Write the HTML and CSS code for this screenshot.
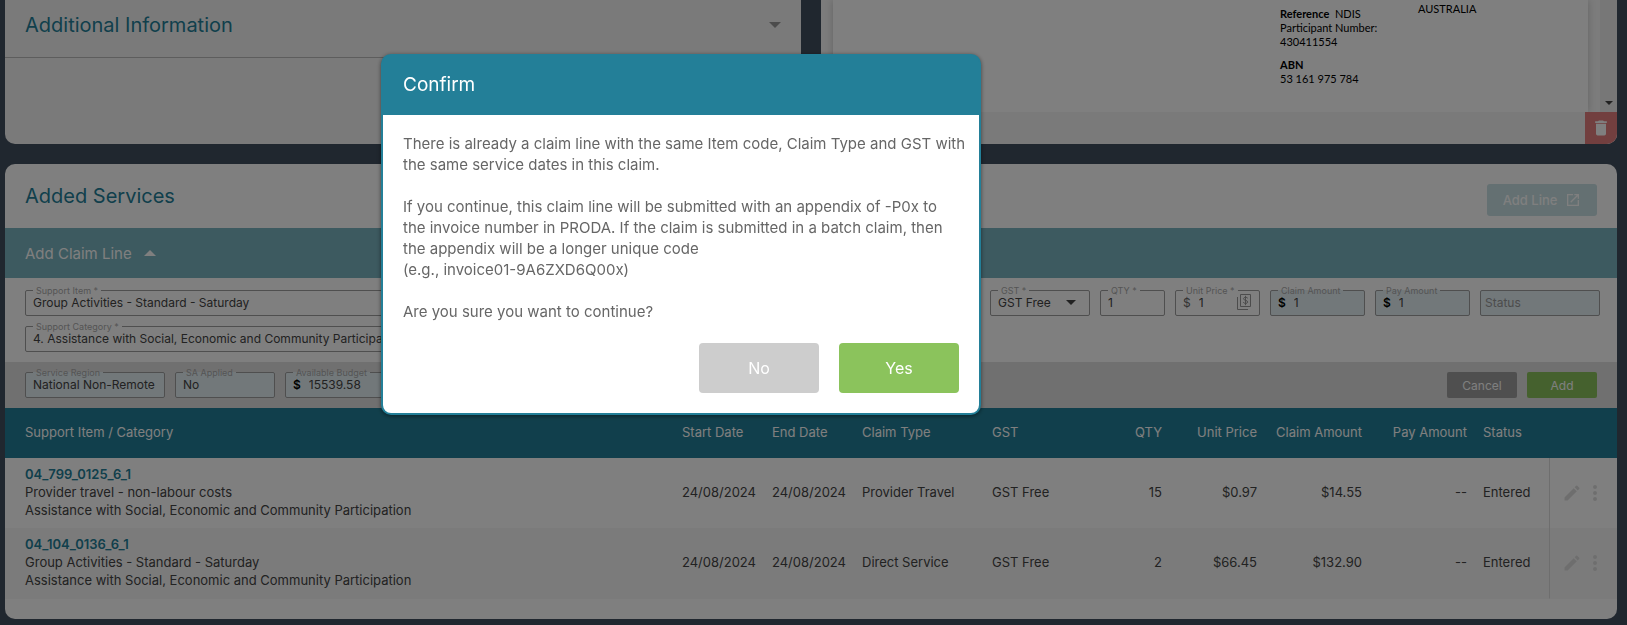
FILE: index.html
```html
<!DOCTYPE html>
<html lang="en">
<head>
  <meta charset="UTF-8">
  <meta name="viewport" content="width=device-width, initial-scale=1.0">
  <title>Claim Services</title>
  <link rel="stylesheet" href="styles.css">
</head>
<body>
  <main class="page">
    <div class="top-row">
      <section class="card info-card">
        <div class="info-header">
          <h2>Additional Information</h2>
          <svg class="caret" width="12" height="6" viewBox="0 0 12 6"><path d="M0 0h12L6 6z"/></svg>
        </div>
      </section>
      <section class="card viewer">
        <div class="viewer-main">
          <div class="document">
            <div class="doc-reference">
              <p><b>Reference</b>&nbsp; NDIS<br>Participant Number:<br>430411554</p>
              <p><b>ABN</b><br>53 161 975 784</p>
            </div>
            <div class="doc-address">AUSTRALIA</div>
          </div>
          <div class="scrollbar">
            <svg width="8" height="4" viewBox="0 0 8 4"><path d="M0 0h8L4 4z"/></svg>
          </div>
        </div>
        <div class="viewer-footer">
          <button type="button" class="delete-button" aria-label="Delete document">
            <svg width="20" height="20" viewBox="0 0 24 24"><path d="M6 19a2 2 0 0 0 2 2h8a2 2 0 0 0 2-2V7H6zM19 4h-3.500l-1-1h-5l-1 1H5v2h14z"/></svg>
          </button>
        </div>
      </section>
    </div>

    <section class="card services">
      <div class="services-header">
        <h2>Added Services</h2>
        <button type="button" class="add-line" disabled>
          Add Line
          <svg width="16" height="16" viewBox="0 0 24 24"><path d="M19 19H5V5h7V3H3v18h18v-9h-2zM14 3v2h3.600l-9.800 9.800 1.400 1.400L19 6.400V10h2V3z"/></svg>
        </button>
      </div>
      <div class="claim-toggle">
        Add Claim Line
        <svg width="12" height="6" viewBox="0 0 12 6"><path d="M0 6h12L6 0z"/></svg>
      </div>
      <form>
        <div class="claim-fields">
          <fieldset class="field">
            <legend><label for="support-item">Support Item *</label></legend>
            <input type="text" id="support-item" value="Group Activities - Standard - Saturday">
          </fieldset>
          <fieldset class="field">
            <legend><label for="gst">GST *</label></legend>
            <select id="gst"><option>GST Free</option></select>
            <svg class="select-arrow" width="10" height="5" viewBox="0 0 10 5"><path d="M0 0h10L5 5z"/></svg>
          </fieldset>
          <fieldset class="field">
            <legend><label for="qty">QTY *</label></legend>
            <input type="text" id="qty" value="1">
          </fieldset>
          <fieldset class="field">
            <legend><label for="unit-price">Unit Price *</label></legend>
            <span class="prefix light">$</span>
            <input type="text" id="unit-price" value="1">
            <svg class="price-icon" width="14" height="18" viewBox="0 0 14 18"><path d="M3.500 1.500h10v12h-10zM.5 4v12.500h10.500M10.800 5.300c-.5-1.300-4.200-1.500-4.300.4 0 2 4.300 1.300 4.200 3.400-.2 1.900-3.900 1.700-4.500 0M8.500 2.800v9.400"/></svg>
          </fieldset>
          <fieldset class="field readonly">
            <legend><label for="claim-amount">Claim Amount</label></legend>
            <span class="prefix">$</span>
            <input type="text" id="claim-amount" value="1" readonly>
          </fieldset>
          <fieldset class="field readonly">
            <legend><label for="pay-amount">Pay Amount</label></legend>
            <span class="prefix">$</span>
            <input type="text" id="pay-amount" value="1" readonly>
          </fieldset>
          <fieldset class="field readonly status-field">
            <input type="text" id="status" placeholder="Status" aria-label="Status" readonly>
          </fieldset>
          <fieldset class="field">
            <legend><label for="support-category">Support Category *</label></legend>
            <input type="text" id="support-category" value="4. Assistance with Social, Economic and Community Participation">
          </fieldset>
        </div>
        <div class="claim-footer">
          <fieldset class="field readonly region">
            <legend><label for="service-region">Service Region</label></legend>
            <input type="text" id="service-region" value="National Non-Remote" readonly>
          </fieldset>
          <fieldset class="field readonly sa-applied">
            <legend><label for="sa-applied">SA Applied</label></legend>
            <input type="text" id="sa-applied" value="No" readonly>
          </fieldset>
          <fieldset class="field readonly budget">
            <legend><label for="budget">Available Budget</label></legend>
            <span class="prefix">$</span>
            <input type="text" id="budget" value="15539.58" readonly>
          </fieldset>
          <div class="form-buttons">
            <button type="button" class="small-button cancel">Cancel</button>
            <button type="submit" class="small-button add">Add</button>
          </div>
        </div>
      </form>

      <table>
        <colgroup>
          <col>
          <col class="col-date">
          <col class="col-date">
          <col class="col-type">
          <col class="col-gst">
          <col class="col-qty">
          <col class="col-price">
          <col class="col-amount">
          <col class="col-amount">
          <col class="col-status">
          <col class="col-actions">
        </colgroup>
        <thead>
          <tr>
            <th>Support Item / Category</th>
            <th>Start Date</th>
            <th>End Date</th>
            <th>Claim Type</th>
            <th>GST</th>
            <th class="num">QTY</th>
            <th class="num">Unit Price</th>
            <th class="num">Claim Amount</th>
            <th class="num">Pay Amount</th>
            <th>Status</th>
            <th></th>
          </tr>
        </thead>
        <tbody>
          <tr>
            <td><strong>04_799_0125_6_1</strong><br>Provider travel - non-labour costs<br>Assistance with Social, Economic and Community Participation</td>
            <td>24/08/2024</td>
            <td>24/08/2024</td>
            <td>Provider Travel</td>
            <td>GST Free</td>
            <td class="num">15</td>
            <td class="num">$0.97</td>
            <td class="num">$14.55</td>
            <td class="num">--</td>
            <td>Entered</td>
            <td class="actions">
              <div class="action-buttons">
                <button type="button" aria-label="Edit"><svg width="20" height="20" viewBox="0 0 24 24"><path d="M3 17.250V21h3.750L17.810 9.940l-3.750-3.750zM20.710 7.040a1 1 0 0 0 0-1.410l-2.340-2.340a1 1 0 0 0-1.410 0l-1.830 1.830 3.750 3.750z"/></svg></button>
                <button type="button" aria-label="More"><svg width="24" height="24" viewBox="0 0 24 24"><circle cx="12" cy="6" r="2"/><circle cx="12" cy="12" r="2"/><circle cx="12" cy="18" r="2"/></svg></button>
              </div>
            </td>
          </tr>
          <tr>
            <td><strong>04_104_0136_6_1</strong><br>Group Activities - Standard - Saturday<br>Assistance with Social, Economic and Community Participation</td>
            <td>24/08/2024</td>
            <td>24/08/2024</td>
            <td>Direct Service</td>
            <td>GST Free</td>
            <td class="num">2</td>
            <td class="num">$66.45</td>
            <td class="num">$132.90</td>
            <td class="num">--</td>
            <td>Entered</td>
            <td class="actions">
              <div class="action-buttons">
                <button type="button" aria-label="Edit"><svg width="20" height="20" viewBox="0 0 24 24"><path d="M3 17.250V21h3.750L17.810 9.940l-3.750-3.750zM20.710 7.040a1 1 0 0 0 0-1.410l-2.340-2.340a1 1 0 0 0-1.410 0l-1.830 1.830 3.750 3.750z"/></svg></button>
                <button type="button" aria-label="More"><svg width="24" height="24" viewBox="0 0 24 24"><circle cx="12" cy="6" r="2"/><circle cx="12" cy="12" r="2"/><circle cx="12" cy="18" r="2"/></svg></button>
              </div>
            </td>
          </tr>
        </tbody>
      </table>
    </section>
  </main>

  <div class="overlay">
    <div class="modal" role="dialog" aria-modal="true" aria-labelledby="modal-title">
      <h1 id="modal-title">Confirm</h1>
      <div class="modal-body">
        <p>There is already a claim line with the same Item code, Claim Type and GST with<br>the same service dates in this claim.</p>
        <p>If you continue, this claim line will be submitted with an appendix of -P0x to<br>the invoice number in PRODA. If the claim is submitted in a batch claim, then<br>the appendix will be a longer unique code<br>(e.g., invoice01-9A6ZXD6Q00x)</p>
        <p>Are you sure you want to continue?</p>
        <div class="modal-buttons">
          <button type="button" class="no">No</button>
          <button type="button" class="yes">Yes</button>
        </div>
      </div>
    </div>
  </div>
</body>
</html>
```
FILE: styles.css
```css
* {
  box-sizing: border-box;
}
body {
  margin: 0;
  background: #404e5e;
  color: #444;
  font-family: Inter, "Open Sans", sans-serif;
  font-size: 13px;
}
button, input, select {
  font: inherit;
  color: inherit;
}
button {
  border: none;
  cursor: pointer;
}
h1, h2, p {
  margin: 0;
}
svg {
  flex: none;
  fill: currentColor;
}
.page {
  display: flex;
  flex-direction: column;
  gap: 20px;
  padding: 0 10px 6px 5px;
}
.card {
  background: #fff;
  border-radius: 10px;
  overflow: hidden;
}
.card h2 {
  color: #237f98;
  font-size: 20px;
  font-weight: 400;
  line-height: 24px;
}

/* top row */
.top-row {
  display: grid;
  grid-template-columns: 1fr 1fr;
  gap: 20px;
  min-height: 144px;
}
.top-row .card {
  border-top-left-radius: 0;
  border-top-right-radius: 0;
}
.info-card {
  background: #f5f5f5;
}
.info-header {
  display: flex;
  align-items: center;
  justify-content: space-between;
  padding: 13px 20px 20px;
  border-bottom: 1px solid #bbb;
}
.caret {
  color: #999;
}
.viewer {
  display: flex;
  flex-direction: column;
}
.viewer-main {
  display: flex;
  flex: 1;
  background: #f8f8f8;
}
.document {
  display: flex;
  justify-content: flex-end;
  flex: 1;
  margin: 0 12px;
  background: #fff;
  box-shadow: 0 0 8px rgba(0, 0, 0, 0.2);
  color: #000;
  font-family: Lato, sans-serif;
  font-size: 11px;
  line-height: 14px;
}
.doc-reference {
  width: 138px;
  padding-top: 7px;
}
.doc-reference p {
  margin-bottom: 9px;
}
.doc-address {
  width: 170px;
  padding-top: 2px;
}
.scrollbar {
  display: flex;
  align-items: flex-end;
  justify-content: center;
  width: 17px;
  padding-bottom: 7px;
  background: #eee;
}
.viewer-footer {
  display: flex;
  justify-content: flex-end;
  background: #f5f5f5;
}
.delete-button {
  display: flex;
  align-items: center;
  justify-content: center;
  width: 32px;
  height: 32px;
  padding: 0;
  background: #e47f7f;
  color: #fff;
}

/* services */
.services-header {
  display: flex;
  align-items: center;
  justify-content: space-between;
  height: 64px;
  padding: 0 20px;
}
.add-line {
  display: flex;
  align-items: center;
  justify-content: center;
  gap: 8px;
  width: 110px;
  height: 32px;
  margin-top: 8px;
  padding: 0;
  border-radius: 3px;
  background: #c8e0e4;
  color: #fff;
  font-weight: 500;
}
.claim-toggle {
  display: flex;
  align-items: center;
  gap: 12px;
  height: 50px;
  padding: 0 20px;
  background: #7ab4c0;
  color: #fff;
  font-size: 15px;
}
.claim-fields {
  display: grid;
  grid-template-columns: 1fr 100px 65px 85px 95px 95px 120px;
  gap: 10px;
  padding: 12px 17px 10px 20px;
}
.field {
  display: flex;
  align-items: center;
  min-width: 0;
  height: 26px;
  margin: 0;
  padding: 0 8px 2px 7px;
  border: 1px solid #9e9e9e;
  border-radius: 2px;
  font-size: 12px;
}
.field legend {
  height: 1px;
  padding: 0 3px;
  color: #aaa;
  font-size: 9px;
  line-height: 1px;
  white-space: nowrap;
}
.field input, .field select {
  flex: 1;
  width: 0;
  min-width: 0;
  height: 22px;
  padding: 0;
  border: none;
  outline: none;
  background: transparent;
  appearance: none;
}
.field.readonly {
  background: #e4f0f5;
}
.field ::placeholder {
  color: #999;
}
.status-field {
  padding-left: 4px;
}
.prefix {
  margin-right: 8px;
  color: #000;
  font-weight: 600;
}
.prefix.light {
  color: #666;
  font-weight: 400;
}
.select-arrow {
  margin-right: 5px;
}
.price-icon {
  fill: none;
  stroke: #999;
}
.claim-footer {
  display: flex;
  align-items: center;
  gap: 10px;
  padding: 10px 20px;
  background: #e0e0e0;
}
.region {
  width: 140px;
}
.sa-applied {
  width: 100px;
}
.budget {
  width: 120px;
}
.form-buttons {
  display: flex;
  gap: 10px;
  margin-left: auto;
}
.small-button {
  width: 70px;
  height: 26px;
  padding: 0;
  border-radius: 2px;
  color: #fff;
  font-size: 12px;
}
.cancel {
  background: #9e9e9e;
}
.add {
  background: #8bc35c;
}

/* table */
table {
  width: 100%;
  margin-bottom: 20px;
  border-collapse: separate;
  border-spacing: 0;
  table-layout: fixed;
  line-height: 18px;
}
th, td {
  padding: 7px 8px 9px;
  text-align: left;
}
th {
  height: 50px;
  background: #237f98;
  color: #fff;
  font-weight: 400;
  white-space: nowrap;
}
th:first-child, td:first-child {
  padding-left: 20px;
}
tbody tr:nth-child(even) {
  background: #f7f7f7;
}
tbody tr:last-child td {
  border-bottom: 1px solid #f7f7f7;
}
td strong {
  color: #237f98;
  font-weight: 600;
}
.num {
  text-align: right;
}
.col-date {
  width: 90px;
}
.col-type {
  width: 130px;
}
.col-gst {
  width: 100px;
}
.col-qty {
  width: 86px;
}
.col-price {
  width: 95px;
}
.col-amount {
  width: 105px;
}
.col-status {
  width: 74px;
}
.col-actions {
  width: 68px;
}
td.actions {
  padding: 0 10px 0 12px;
  border-left: 1px solid #ddd;
}
.action-buttons {
  display: flex;
  align-items: center;
  justify-content: space-between;
}
.action-buttons button {
  display: flex;
  padding: 0;
  background: none;
  color: #ddd;
}

/* confirm dialog */
.overlay {
  position: fixed;
  inset: 0;
  background: rgba(0, 0, 0, 0.5);
}
.modal {
  position: absolute;
  top: 54px;
  left: 381px;
  width: 600px;
  border: 2px solid #237f98;
  border-radius: 10px;
  background: #fff;
  box-shadow: 0 1px 4px rgba(0, 0, 0, 0.5);
  color: #666;
}
.modal h1 {
  padding: 17px 20px;
  border-radius: 6px 6px 0 0;
  background: #237f98;
  box-shadow: 0 0 0 1px #237f98;
  color: #fff;
  font-size: 19px;
  font-weight: 400;
  line-height: 24px;
}
.modal-body {
  padding: 19px 20px 20px;
  font-size: 15px;
  line-height: 21px;
}
.modal-body p {
  margin-bottom: 21px;
  white-space: nowrap;
}
.modal-buttons {
  display: flex;
  justify-content: flex-end;
  gap: 20px;
}
.modal-buttons button {
  width: 120px;
  height: 50px;
  border-radius: 4px;
  color: #fff;
  font-size: 16px;
}
.no {
  background: #cdcdcd;
}
.yes {
  background: #8bc35c;
}
```
